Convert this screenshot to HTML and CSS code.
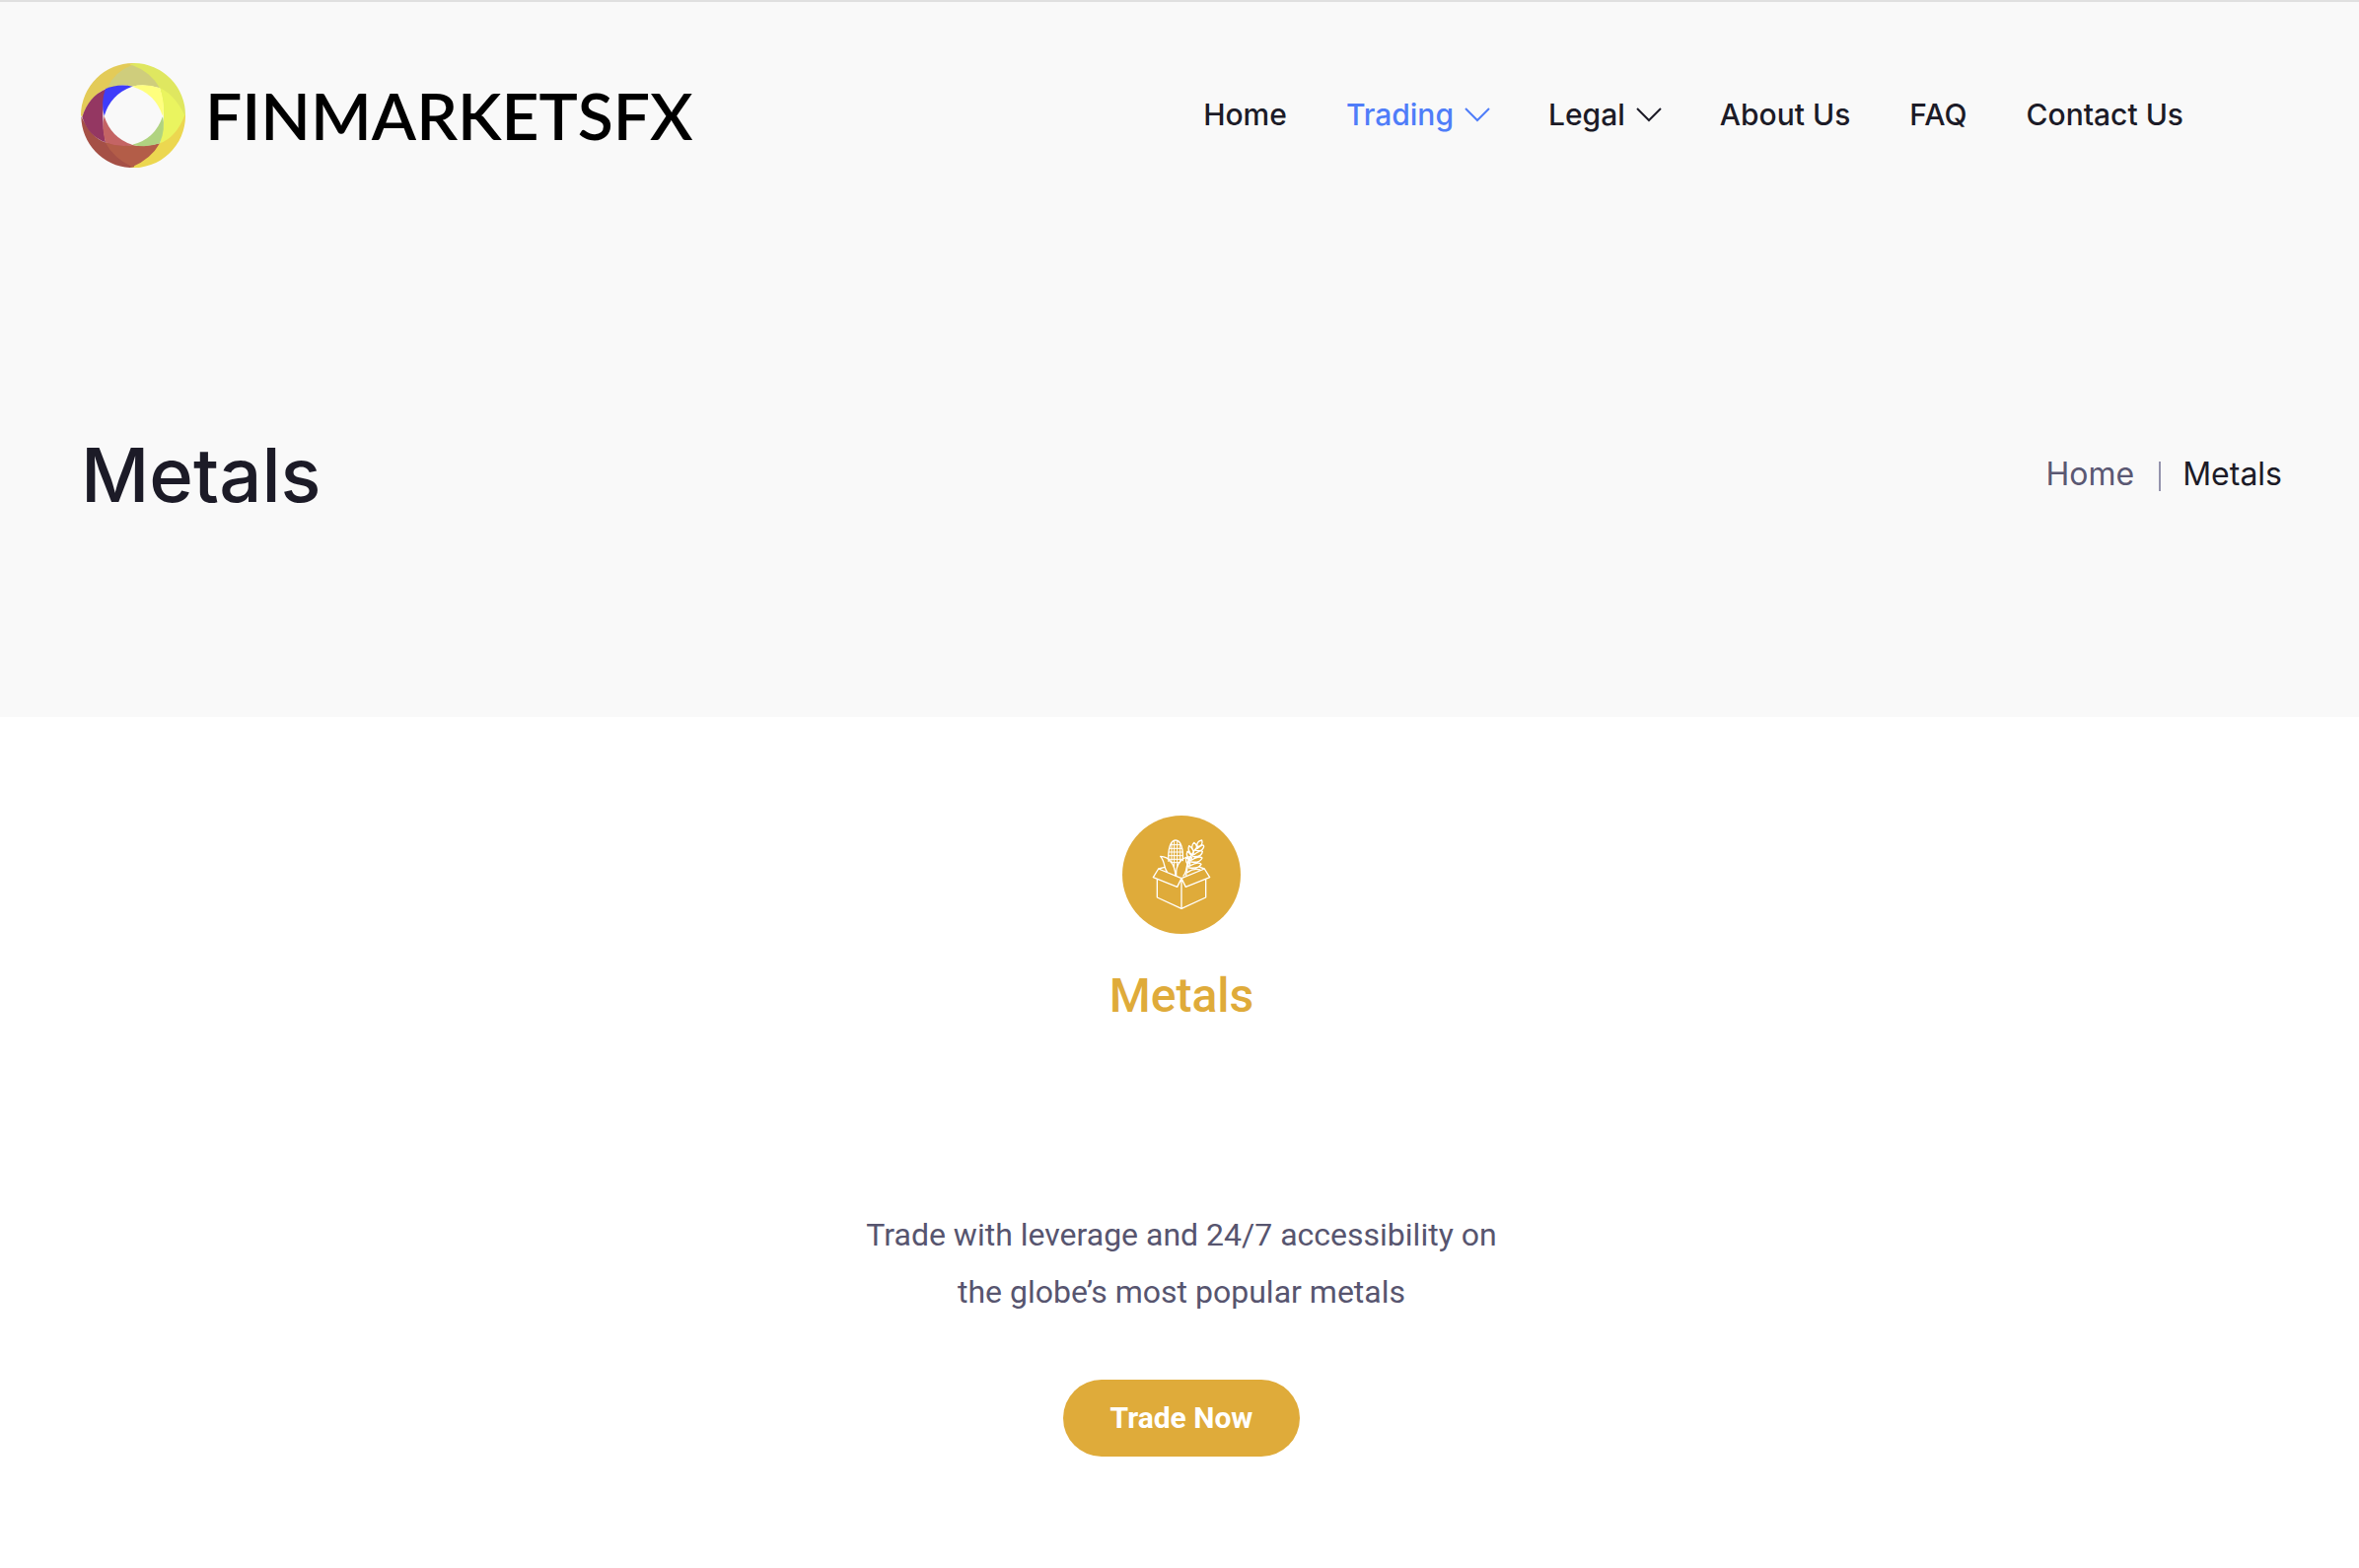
FILE: index.html
```html
<!DOCTYPE html>
<html lang="en">
<head>
<meta charset="utf-8">
<title>Metals - FINMARKETSFX</title>
<meta name="viewport" content="width=device-width, initial-scale=1">
<link rel="stylesheet" href="styles.css">
</head>
<body>
<div class="banner">
  <header class="header">
    <a class="brand" href="#">
      <svg class="brand-mark" viewBox="66 71 318 318" aria-hidden="true">
        <path fill="#e3cb58" d="M66 230A160 160 0 0 1 228 71L228 90L190 138L140 150Q90 175 70 235Z"/>
        <path fill="#dfe760" d="M215 74L228 71A158 158 0 0 1 384 230L378 240L306 147Z"/>
        <path fill="#ecd750" d="M384 230A158 158 0 0 1 215 389L306 315L378 230Z"/>
        <path fill="#a55046" d="M67 233Q100 300 140 312L222 322L228 387L215 389A158 158 0 0 1 67 233Z"/>
        <path fill="#b35d48" d="M140 312Q185 328 222 320Q260 328 306 315Q280 362 222 387Q165 360 140 312Z"/>
        <path fill="#cfcd7c" d="M222 77Q172 95 148 143Q185 134 222 142Q262 133 306 147Q278 97 222 77Z"/>
        <path fill="#eaf45f" d="M306 147Q350 165 382 230Q355 298 306 315Q330 230 306 147Z"/>
        <path fill="#943762" d="M70 235Q90 172 142 150Q124 230 141 312Q88 292 70 235Z"/>
        <path fill="#3e3cfa" d="M141 149Q180 132 224 142L180 190L137 232Q126 190 141 149Z"/>
        <path fill="#ffff7e" d="M222 142Q262 132 306 147Q322 190 316 234L270 180Z"/>
        <path fill="#c46464" d="M137 230Q128 270 141 312Q180 328 224 320L170 280Z"/>
        <path fill="#b0d380" d="M315 232Q324 270 306 315Q265 330 222 319L280 280Z"/>
        <path fill="#f9f9f9" d="M222 142Q292 162 315 232Q292 302 222 319Q158 298 137 232Q156 166 222 142Z"/>
      </svg>
      <span class="brand-name">FINMARKETSFX</span>
    </a>
    <nav class="nav" aria-label="Main">
      <a href="#">Home</a>
      <a class="active" href="#">Trading<svg class="chevron" viewBox="0 0 24 16" aria-hidden="true"><path d="M0 2L12 14L24 2"/></svg></a>
      <a href="#">Legal<svg class="chevron" viewBox="0 0 24 16" aria-hidden="true"><path d="M0 2L12 14L24 2"/></svg></a>
      <a href="#">About Us</a>
      <a href="#">FAQ</a>
      <a href="#">Contact Us</a>
    </nav>
  </header>
  <section class="page-head">
    <h1>Metals</h1>
    <nav class="crumbs" aria-label="Breadcrumb">
      <a href="#">Home</a>
      <span class="divider"></span>
      <span class="current">Metals</span>
    </nav>
  </section>
</div>
<main class="content">
  <svg class="badge" viewBox="54 51 360 360" aria-hidden="true">
    <circle cx="234" cy="231" r="180" fill="#dfab3a"/>
    <g fill="none" stroke="#fff" stroke-width="4" stroke-linejoin="round" stroke-linecap="round">
      <path d="M160 245V300L234 334L308 300V245"/>
      <path d="M234 244V334M164 213L234 242L221 268L148 239ZM304 213L234 242L247 268L320 239ZM164 213L184 208M304 213L290 208"/>
      <path d="M195 190C192 155 200 126 216 126C232 126 240 152 238 188"/>
      <path stroke-width="3" d="M204 136V192M212 127V205M221 127V205M230 138V192M200 140H232M197 151H236M196 162H238M195 173H238M196 184H237M201 194H230"/>
      <path d="M216 234C214 200 198 176 170 175C184 190 180 210 190 222M218 234C216 200 232 178 262 176C246 190 254 220 240 234"/>
      <path d="M248 232C252 200 262 165 282 146M282 146Q278 130 296 126Q302 142 282 146M283 151Q302 134 302 146Q296 162 279 157M272 160Q260 146 272 133Q286 144 277 157M268 172Q250 158 257 143Q274 154 270 170M262 188Q246 174 252 160Q268 172 264 186M257 206Q244 190 249 178Q263 190 259 204M272 170Q292 154 298 160Q296 178 269 176M266 186Q288 172 297 180Q290 196 263 192M260 204Q284 190 294 199Q286 214 257 210M252 224Q272 210 290 216"/>
    </g>
  </svg>
  <h2>Metals</h2>
  <p>Trade with leverage and 24/7 accessibility on the globe’s most popular metals</p>
  <button class="cta" type="button">Trade Now</button>
</main>
</body>
</html>
```
FILE: styles.css
```css
* {
  box-sizing: border-box;
}

body {
  margin: 0;
  background: #fff;
  color: #1c1b27;
  font-family: Inter, "Liberation Sans", sans-serif;
}

a {
  color: inherit;
  text-decoration: none;
}

.banner {
  border-top: 2px solid #e0e0e0;
  background: #f9f9f9;
}

.header,
.page-head {
  display: flex;
  align-items: center;
  justify-content: space-between;
  padding: 0 78px 0 82px;
}

.header {
  height: 230px;
  padding-right: 178px;
}

.brand {
  display: flex;
  align-items: center;
  gap: 20px;
  color: #000;
}

.brand-mark {
  width: 106px;
  height: 106px;
}

.brand-name {
  font: 600 66px/80px Lato, sans-serif;
}

.nav {
  display: flex;
  gap: 60px;
  padding-bottom: 2px;
  font-size: 30px;
  line-height: 40px;
  font-weight: 500;
}

.nav a {
  display: flex;
  align-items: center;
}

.nav .active {
  color: #4f7df9;
}

.chevron {
  width: 24px;
  height: 16px;
  margin-left: 12px;
  overflow: visible;
  fill: none;
  stroke: currentColor;
  stroke-width: 2;
}

.page-head {
  padding-top: 199px;
  padding-bottom: 196px;
}

h1 {
  margin: 0;
  font-size: 76px;
  line-height: 100px;
  font-weight: 500;
}

.crumbs {
  display: flex;
  align-items: center;
  color: #5a5873;
  font-size: 32px;
  line-height: 40px;
}

.divider {
  width: 2px;
  height: 30px;
  margin: 4px 22px 0 25px;
  background: #9493ad;
}

.current {
  color: #1c1b27;
}

.content {
  display: flex;
  flex-direction: column;
  align-items: center;
  padding: 100px 78px 112px 82px;
  font-family: Roboto, sans-serif;
}

.badge {
  width: 120px;
  height: 120px;
}

h2 {
  margin: 34px 0 0;
  color: #dfab3a;
  font-size: 48px;
  line-height: 58px;
  font-weight: 500;
}

p {
  max-width: 660px;
  margin: 184px 0 0;
  color: #57556f;
  font-size: 32px;
  line-height: 58px;
  text-align: center;
}

.cta {
  height: 78px;
  margin-top: 60px;
  padding: 0 48px;
  border: 0;
  border-radius: 39px;
  background: #dfab3a;
  color: #fff;
  font: 700 30px/40px Roboto, sans-serif;
}
```
